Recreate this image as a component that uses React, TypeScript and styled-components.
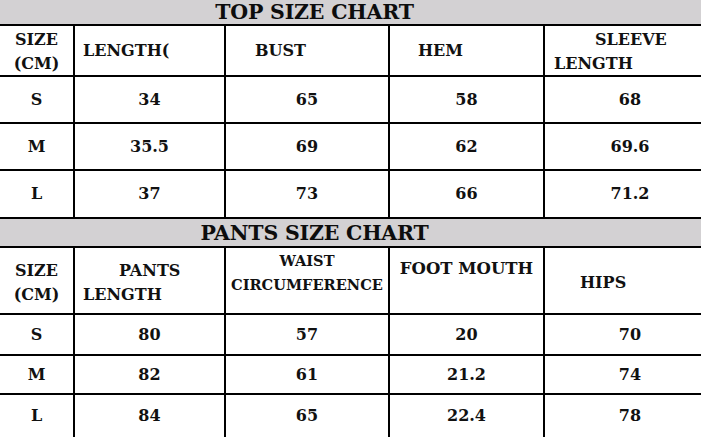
import React from 'react';
import styled, {createGlobalStyle} from "styled-components";

const GlobalStyle = createGlobalStyle`
  html, body {
    margin: 0;
    padding: 0;
    background: #fff;
  }
  body {
    font-family: "DejaVu Serif", "Liberation Serif", serif;
    color: #111;
  }
`

const Page = styled.div`
  width: 701px;
  height: 437px;
  overflow: hidden;
  display: flex;
  flex-direction: column;
  gap: 2px;
  background: #000;
`
const Chart = styled.div<{ $rows: string }>`
  display: grid;
  grid-template-columns: 73px 149px 162px 153px 156px;
  grid-template-rows: ${p => p.$rows};
  gap: 2px;
  background: #000;
`
const Title = styled.div`
  grid-column: 1 / -1;
  background: #d3d1d3;
  display: flex;
  align-items: center;
  justify-content: center;
  padding-right: 72px;
  font-size: 20.5px;
  font-weight: bold;
  letter-spacing: -0.2px;
  color: #0d0d0d;
`
const Cell = styled.div<{ $align?: 'center' | 'left', $valign?: 'center' | 'start', $pad?: number, $top?: number, $size?: number }>`
  background: #fff;
  display: flex;
  flex-direction: column;
  justify-content: ${p => p.$valign === 'start' ? 'flex-start' : 'center'};
  align-items: ${p => p.$align === 'left' ? 'flex-start' : 'center'};
  padding-left: ${p => p.$pad || 0}px;
  padding-top: ${p => p.$top || 0}px;
  font-size: ${p => p.$size || 16}px;
  font-weight: bold;
  line-height: 24px;
  white-space: nowrap;
  box-sizing: border-box;
`
const Line = styled.span<{ $indent?: number }>`
  display: block;
  padding-left: ${p => p.$indent || 0}px;
`

interface row {
    size: string
    values: string[]
}

const topRows: row[] = [
    {size: 'S', values: ['34', '65', '58', '68']},
    {size: 'M', values: ['35.5', '69', '62', '69.6']},
    {size: 'L', values: ['37', '73', '66', '71.2']},
]
const pantsRows: row[] = [
    {size: 'S', values: ['80', '57', '20', '70']},
    {size: 'M', values: ['82', '61', '21.2', '74']},
    {size: 'L', values: ['84', '65', '22.4', '78']},
]

const DataRow = ({r}: { r: row }) => (
    <>
        <Cell>{r.size}</Cell>
        {r.values.map((v, i) => (
            <Cell key={i} $pad={i === 3 ? 14 : 0}>{v}</Cell>
        ))}
    </>
)

const App = () => {
    return (
        <>
            <GlobalStyle/>
            <Page>
                <Chart $rows="24px 49px 45px 45px 46px">
                    <Title>TOP SIZE CHART</Title>
                    <Cell $top={2}>
                        <Line>SIZE</Line>
                        <Line>(CM)</Line>
                    </Cell>
                    <Cell $align="left" $pad={8}>LENGTH(</Cell>
                    <Cell $align="left" $pad={29}>BUST</Cell>
                    <Cell $align="left" $pad={28}>HEM</Cell>
                    <Cell $align="left" $pad={9} $top={2}>
                        <Line $indent={41}>SLEEVE</Line>
                        <Line>LENGTH</Line>
                    </Cell>
                    {topRows.map(r => <DataRow key={r.size} r={r}/>)}
                </Chart>
                <Chart $rows="27px 65px 39px 37px 42px">
                    <Title>PANTS SIZE CHART</Title>
                    <Cell $top={5}>
                        <Line>SIZE</Line>
                        <Line>(CM)</Line>
                    </Cell>
                    <Cell $align="left" $pad={8} $top={5}>
                        <Line $indent={36}>PANTS</Line>
                        <Line>LENGTH</Line>
                    </Cell>
                    <Cell $valign="start" $top={1} $size={14.6}>
                        <Line>WAIST</Line>
                        <Line>CIRCUMFERENCE</Line>
                    </Cell>
                    <Cell $valign="start" $top={9} $size={16.5}>FOOT MOUTH</Cell>
                    <Cell $align="left" $pad={35} $top={5}>HIPS</Cell>
                    {pantsRows.map(r => <DataRow key={r.size} r={r}/>)}
                </Chart>
            </Page>
        </>
    );
};

export default App;
